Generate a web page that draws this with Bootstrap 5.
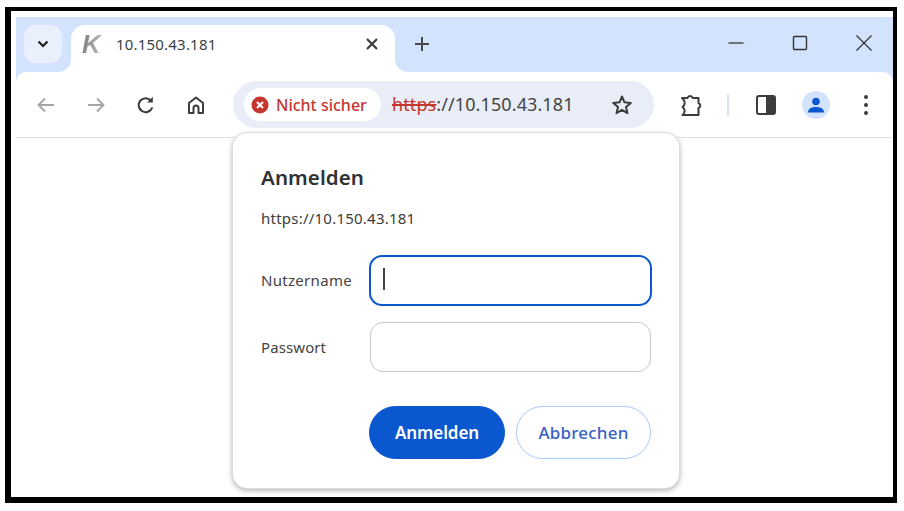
<!DOCTYPE html>
<html lang="de">
<head>
<meta charset="utf-8">
<title>Anmelden</title>
<link href="https://cdn.jsdelivr.net/npm/bootstrap@5.3.0/dist/css/bootstrap.min.css" rel="stylesheet">
<style>
html,body{height:100%;margin:0;background:#fff;overflow:hidden}
body{font-family:"Noto Sans","Open Sans",sans-serif;color:#3c3c3c}
.frame{position:absolute;left:5px;top:7px;width:892px;height:496px;border:solid #000;border-width:4px 4px 6px 6px;padding:6px 0 0 5px;background:#fff}
.chromewrap{background:#d3e3fd}
.chrome{height:55px;padding-top:8px}
.tabrow{height:47px;padding-left:8px;position:relative}
.downbtn{width:38px;height:38px;border-radius:11px;background:#e9f0fc;margin-right:9px}
.tabitem{width:324px;height:47px;background:#fff;border-radius:14px 14px 0 0;position:relative;padding:0 16px 9px 11px;color:#3b3f43}
.tabitem::before,.tabitem::after{content:"";position:absolute;bottom:0;width:12px;height:12px}
.tabitem::before{left:-12px;background:radial-gradient(circle at 0 0,transparent 11.5px,#fff 12px)}
.tabitem::after{right:-12px;background:radial-gradient(circle at 100% 0,transparent 11.5px,#fff 12px)}
.klogo{font:italic 700 26px/1 "Liberation Sans",sans-serif;width:34px;background:linear-gradient(100deg,#777,#bbb 55%,#888);-webkit-background-clip:text;background-clip:text;color:transparent}
.tabtitle{font-size:15px;letter-spacing:.2px;flex:1}
.plusicon{margin:4px 0 0 12px}
.winbtns{margin-left:auto;gap:46px;padding-right:20px;height:36px}
.toolbar{height:65px;background:#fff;border-radius:10px 10px 0 0;position:relative;padding:0 23px 0 18px}
.rule{height:1px;background:#e3e3e3}
.navicons{width:199px;gap:26px}
.omni{width:421px;height:47px;border-radius:24px;background:#e9edf7;padding:0 20px 0 11px}
.chipitem{height:33px;width:137px;border-radius:17px;background:#fff;color:#c5362c;font-size:16px;padding-left:7px;gap:7px;font-weight:500}
.urltext{font-size:18px;margin-left:11px;letter-spacing:.1px;color:#444;flex:1}
.urltext s{color:#c5362c;text-decoration-thickness:1.5px}
.rightbar{margin-left:auto}
.vline{width:2px;height:22px;background:#d3e3fd;margin-left:24px}
.panelicon{margin-left:25px}
.avatar{width:28px;height:28px;border-radius:50%;background:#d3e3fd;margin-left:24px}
.dotsicon{margin-left:32px}
.dlg{position:absolute;left:221px;top:121px;width:448px;height:357px;background:#fff;border:1px solid #dcdcdc;border-radius:15px;box-shadow:0 2px 5px rgba(0,0,0,.28);padding:29px 28px 28px;display:flex;flex-direction:column}
.dlgtitle{font-size:20.5px;font-weight:600;line-height:30px;color:#303134;letter-spacing:.1px;margin:0}
.dlgurl{font-size:15px;line-height:22px;margin-top:15px;color:#3c3c3c;letter-spacing:.23px}
.fieldrow{display:grid;grid-template-columns:108px 1fr;align-items:center}
.fieldrow1{margin-top:26px}
.fieldrow2{margin-top:16px}
.fieldlabel{font-size:15px;color:#444;letter-spacing:.1px;margin:0}
.fieldlabel1{letter-spacing:.3px}
.fieldbox{height:51px;border-radius:13px;border:2.5px solid #0b57d0;box-shadow:none!important;width:283px}
.fieldbox:focus{border-color:#0b57d0}
.fieldbox2{height:50px;border:1px solid #c7c7c7;width:281px;margin-left:1px}
.fieldbox2:focus{border-color:#c7c7c7}
.caretbar{position:absolute;left:150px;top:135px;width:2px;height:22px;background:#444}
.actionrow{gap:11px;margin-top:34px}
.pillbtn{height:53px;border-radius:27px;font-size:17px;font-weight:600;letter-spacing:-.1px;padding:0}
.pillmain{width:136px;background:#0b57d0;border:1px solid #0b57d0;color:#fff}
.pillalt{width:135px;background:#fff;border:1px solid #a8c7fa;color:#3a5fc4;font-weight:500;letter-spacing:.2px}
</style>
</head>
<body>
<div class="frame">
  <div class="chromewrap">
  <div class="chrome">
    <div class="tabrow d-flex align-items-start">
      <div class="downbtn d-flex align-items-center justify-content-center">
        <svg width="14" height="10" viewBox="0 0 14 10"><path d="M2.5 2.5 7 7l4.5-4.5" fill="none" stroke="#1f1f1f" stroke-width="2.2"/></svg>
      </div>
      <div class="tabitem d-flex align-items-center">
        <span class="klogo">K</span>
        <span class="tabtitle">10.150.43.181</span>
        <svg width="14" height="14" viewBox="0 0 14 14"><path d="M2 2l10 10M12 2 2 12" stroke="#3c3c3c" stroke-width="2.2"/></svg>
      </div>
      <svg class="plusicon" width="30" height="30" viewBox="0 0 30 30"><path d="M15 8v14M8 15h14" stroke="#474747" stroke-width="2"/></svg>
      <div class="winbtns d-flex align-items-center">
        <svg width="18" height="18" viewBox="0 0 18 18"><path d="M1.5 9h15" stroke="#444" stroke-width="1.4"/></svg>
        <svg width="18" height="18" viewBox="0 0 18 18"><rect x="2.5" y="2.5" width="13" height="13" rx="1" fill="none" stroke="#333" stroke-width="1.4"/></svg>
        <svg width="18" height="18" viewBox="0 0 18 18"><path d="M1.5 1.5l15 15M16.5 1.5l-15 15" stroke="#333" stroke-width="1.3"/></svg>
      </div>
    </div>
  </div>
  <div class="toolbar d-flex align-items-center">
    <div class="navicons d-flex align-items-center">
      <svg width="24" height="24" viewBox="0 0 24 24"><path d="M20 12H5M11 5.5 4.5 12l6.5 6.5" fill="none" stroke="#a4a6a9" stroke-width="1.9"/></svg>
      <svg width="24" height="24" viewBox="0 0 24 24"><path d="M4 12h15M13 5.5l6.500 6.500-6.500 6.500" fill="none" stroke="#a4a6a9" stroke-width="1.900"/></svg>
      <svg width="24" height="24" viewBox="0 0 24 24"><path d="M18.300 14.500a7 7 0 1 1-1-6.500" fill="none" stroke="#3c3c3c" stroke-width="2.100"/><path d="M18.800 3.800v5.700h-5.700z" fill="#3c3c3c"/></svg>
      <svg width="24" height="24" viewBox="0 0 24 24"><path d="M5 20V10l7-5.500 7 5.500v10h-4.500v-5a2.500 2.500 0 0 0-5 0v5z" fill="none" stroke="#3c3c3c" stroke-width="2" stroke-linejoin="round"/></svg>
    </div>
    <div class="omni d-flex align-items-center">
      <div class="chipitem d-flex align-items-center">
        <svg width="18" height="18" viewBox="0 0 18 18"><circle cx="9" cy="9" r="8.500" fill="#c5362c"/><path d="M6 6l6 6M12 6l-6 6" stroke="#fff" stroke-width="2"/></svg>
        <span>Nicht sicher</span>
      </div>
      <div class="urltext"><s>https</s>://10.150.43.181</div>
      <svg width="24" height="24" viewBox="0 0 24 24"><path d="M12 3.500l2.500 5.800 6.300.6-4.800 4.100 1.500 6.200-5.500-3.300-5.500 3.300 1.500-6.200-4.800-4.100 6.300-.6z" fill="none" stroke="#3c3c3c" stroke-width="2" stroke-linejoin="round"/></svg>
    </div>
    <div class="rightbar d-flex align-items-center">
      <svg width="26" height="26" viewBox="0 0 26 26"><path d="M5 6h5.500a2.700 2.700 0 0 1 5.200 0H21.500v5.200a2.500 2.500 0 0 1 0 4.800V23H5.500c1.800-1.500 2.200-3 2.200-4.500S6.800 16 5.500 15c1.300-1 2.200-2.500 2.200-4S6.800 7.500 5 6z" fill="none" stroke="#3c3c3c" stroke-width="2" stroke-linejoin="round"/></svg>
      <div class="vline"></div>
      <svg class="panelicon" width="24" height="24" viewBox="0 0 24 24"><rect x="3" y="3" width="18" height="18" rx="2" fill="none" stroke="#3c3c3c" stroke-width="2"/><rect x="12" y="3" width="9" height="18" fill="#3c3c3c"/></svg>
      <div class="avatar d-flex align-items-center justify-content-center">
        <svg width="22" height="22" viewBox="0 0 22 22"><circle cx="11" cy="7.500" r="3.800" fill="#0b57d0"/><path d="M3 18.500c0-3.800 3.500-5.500 8-5.500s8 1.700 8 5.500z" fill="#0b57d0"/></svg>
      </div>
      <svg class="dotsicon" width="8" height="22" viewBox="0 0 8 22"><circle cx="4" cy="3" r="2" fill="#3c3c3c"/><circle cx="4" cy="11" r="2" fill="#3c3c3c"/><circle cx="4" cy="19" r="2" fill="#3c3c3c"/></svg>
    </div>
  </div>
  </div>
  <div class="rule"></div>
  <div class="dlg">
    <h1 class="dlgtitle">Anmelden</h1>
    <div class="dlgurl">https://10.150.43.181</div>
    <div class="fieldrow fieldrow1">
      <label class="fieldlabel fieldlabel1" for="uname">Nutzername</label>
      <input id="uname" class="form-control fieldbox" type="text">
    </div>
    <div class="fieldrow fieldrow2">
      <label class="fieldlabel" for="pword">Passwort</label>
      <input id="pword" class="form-control fieldbox fieldbox2" type="password">
    </div>
    <div class="actionrow d-flex justify-content-end">
      <button class="btn pillbtn pillmain" type="button">Anmelden</button>
      <button class="btn pillbtn pillalt" type="button">Abbrechen</button>
    </div>
    <span class="caretbar"></span>
  </div>
</div>
</body>
</html>
